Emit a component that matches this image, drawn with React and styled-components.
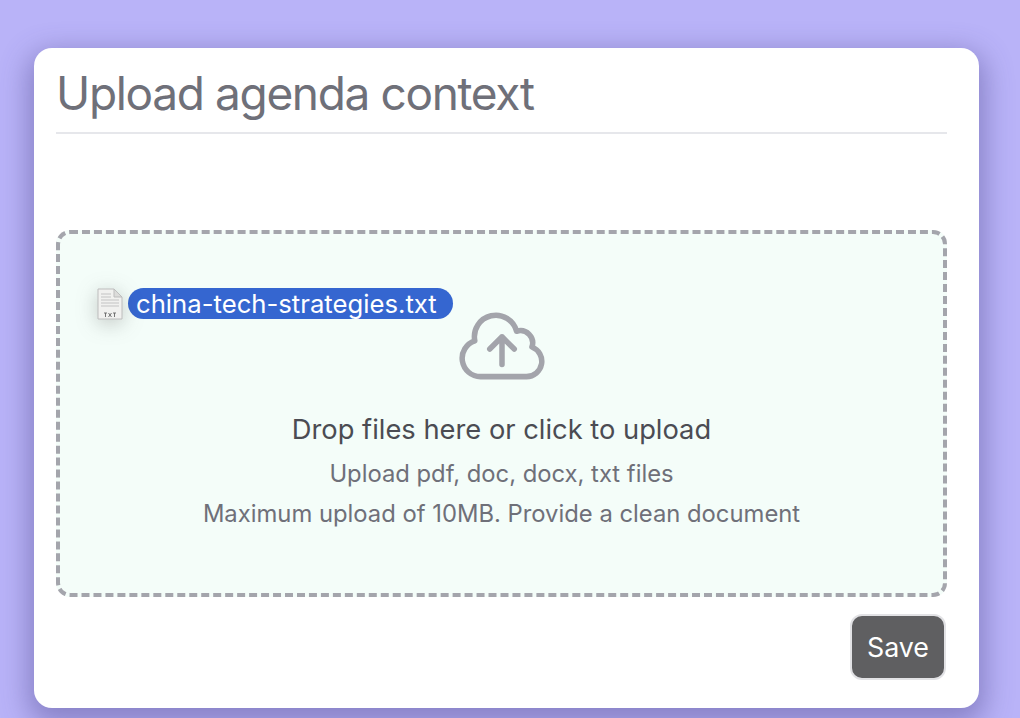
import React from "react";
import styled, { createGlobalStyle } from "styled-components";

const Global = createGlobalStyle`
  html, body {
    margin: 0;
    height: 100%;
    background: #b9b3f8;
    font-family: Inter, "Liberation Sans", sans-serif;
    overflow: hidden;
  }
`;

const Page = styled.div`
  padding: 48px 41px 10px 34px;
`;

const Card = styled.section`
  box-sizing: border-box;
  width: 945px;
  height: 660px;
  background: #fff;
  border-radius: 18px;
  padding: 14px 32px 28px 22px;
  display: flex;
  flex-direction: column;
  box-shadow: 0 10px 28px 6px rgba(70, 62, 130, 0.42);
`;

const Title = styled.h1`
  margin: 0;
  height: 70px;
  border-bottom: 2px solid #e6e7eb;
  font-size: 46px;
  line-height: 62px;
  font-weight: 400;
  letter-spacing: -1.35px;
  color: #6f7079;
`;

const DropZone = styled.div`
  position: relative;
  box-sizing: border-box;
  margin-top: 96px;
  height: 368px;
  background: #f4fdf9;
  border: 4px dashed #a4a5ac;
  border-radius: 14px;
  display: flex;
  flex-direction: column;
  align-items: center;
  padding-top: 63px;
`;

const CloudIcon = styled.svg`
  width: 98px;
  height: 98px;
  color: #a3a4ab;
`;

const Heading = styled.p`
  margin: 17px 0 0;
  font-size: 27.3px;
  line-height: 36px;
  color: #4b4c53;
`;

const Hint = styled.p`
  margin: ${(p) => p.$gap}px 0 0;
  font-size: 23.8px;
  line-height: 32px;
  color: #6f7079;
`;

const DragGhost = styled.div`
  position: absolute;
  left: 37px;
  top: 54px;
  display: flex;
  align-items: center;
  gap: 5px;
`;

const FileIcon = styled.svg`
  width: 26px;
  height: 32px;
  filter: drop-shadow(0 4px 10px rgba(60, 60, 60, 0.28));
`;

const FileName = styled.span`
  background: #3566d0;
  color: #fff;
  border-radius: 16px;
  padding: 0 16px 0 8px;
  height: 31px;
  font-size: 25.7px;
  line-height: 31px;
  white-space: nowrap;
`;

const Footer = styled.div`
  display: flex;
  justify-content: flex-end;
  margin-top: 17px;
  padding-right: 1px;
`;

const SaveButton = styled.button`
  box-sizing: border-box;
  width: 96px;
  height: 66px;
  background: #5f5f61;
  border: 2px solid #e2e2e5;
  border-radius: 12px;
  color: #fff;
  font-family: inherit;
  font-size: 26.8px;
`;

const App = () => (
  <Page>
    <Global />
    <Card>
      <Title>Upload agenda context</Title>
      <DropZone>
        <DragGhost>
          <FileIcon viewBox="0 0 26 32">
            <path d="M1 1h16l8 8v22H1z" fill="#f1f1ef" stroke="#bdbdbd" />
            <path d="M17 1v8h8z" fill="#dcdcda" stroke="#bdbdbd" />
            <path
              d="M4 6h10M4 9h10M4 12h18M4 15h18M4 18h18"
              stroke="#d2d2d2"
              strokeWidth="1.4"
            />
            <path
              d="M7 25h3M8.500 25v4M11.500 25l3 4M14.500 25l-3 4M16 25h3M17.500 25v4"
              stroke="#666"
              strokeWidth="0.9"
              fill="none"
            />
          </FileIcon>
          <FileName>china-tech-strategies.txt</FileName>
        </DragGhost>
        <CloudIcon viewBox="0 0 24 24" fill="none" stroke="currentColor" strokeWidth="1.35" strokeLinecap="round" strokeLinejoin="round">
          <path d="M12 16.500V9.750m0 0 3 3m-3-3-3 3M6.750 19.500a4.500 4.500 0 0 1-1.410-8.775 5.250 5.250 0 0 1 10.233-2.330 3 3 0 0 1 3.758 3.848A3.752 3.752 0 0 1 18 19.500H6.750Z" />
        </CloudIcon>
        <Heading>Drop files here or click to upload</Heading>
        <Hint $gap={10}>Upload pdf, doc, docx, txt files</Hint>
        <Hint $gap={8}>Maximum upload of 10MB. Provide a clean document</Hint>
      </DropZone>
      <Footer>
        <SaveButton>Save</SaveButton>
      </Footer>
    </Card>
  </Page>
);

export default App;
